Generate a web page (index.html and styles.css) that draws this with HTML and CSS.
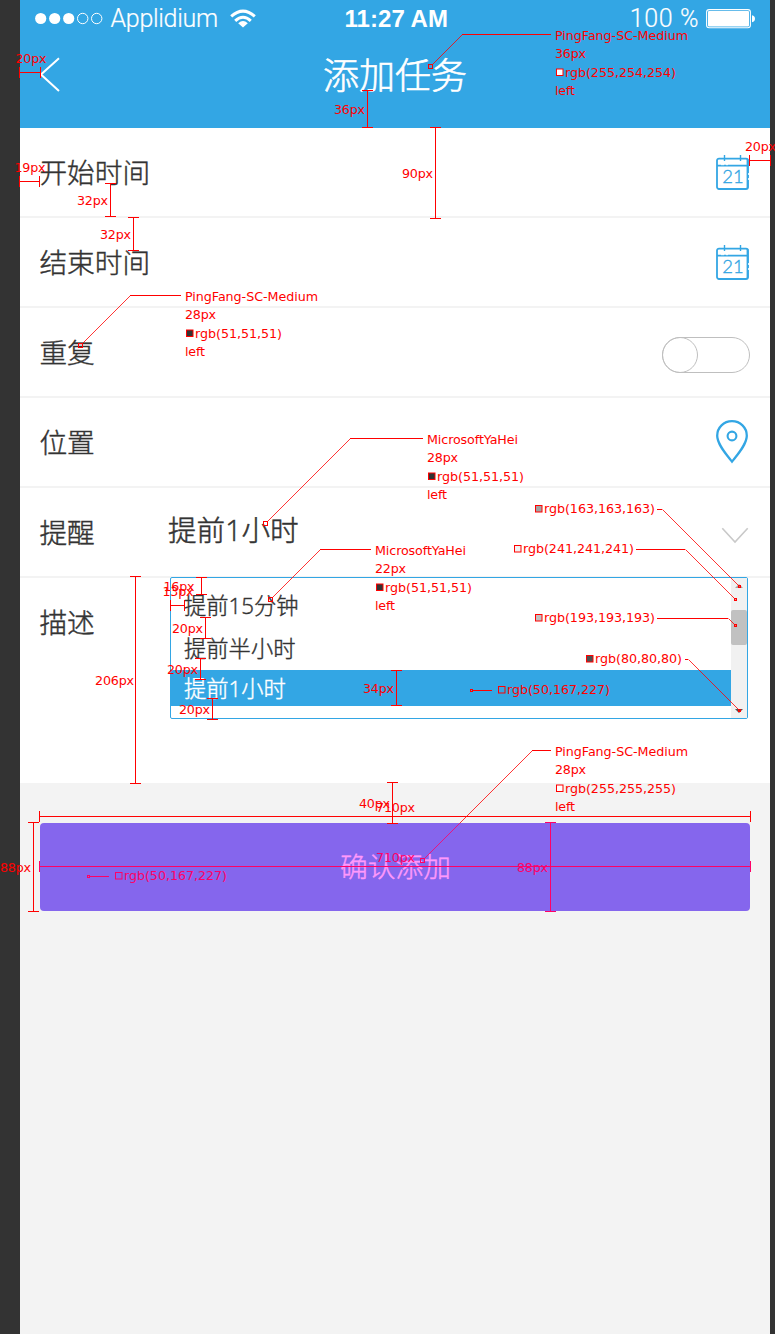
FILE: index.html
```html
<!DOCTYPE html>
<html lang="zh-CN">
<head>
<meta charset="utf-8">
<title>添加任务</title>
<link rel="stylesheet" href="styles.css">
</head>
<body>
<div class="board">
  <main class="phone">
    <header class="header">
      <div class="status">
        <div class="carrier">
          <svg class="signal" width="68" height="13" viewBox="0 0 68 13"><g fill="#fff"><circle cx="5.7" cy="6.5" r="5.6"/><circle cx="19.7" cy="6.5" r="5.6"/><circle cx="33.7" cy="6.5" r="5.6"/></g><g fill="none" stroke="#fff"><circle cx="47.7" cy="6.5" r="5.2"/><circle cx="61.7" cy="6.5" r="5.2"/></g></svg>
          <span class="carrier-name">Applidium</span>
          <svg class="wifi" width="26" height="19" viewBox="0 0 26 19"><g fill="none" stroke="#fff" stroke-width="3"><path d="M1.2 7.4Q13-3.2 24.8 7.4"/><path d="M5.2 11.8Q13 4.6 20.8 11.8"/></g><path d="M8.2 14.2Q13 10 17.8 14.2L13 18.6Z" fill="#fff"/></svg>
        </div>
        <span class="clock">11:27 AM</span>
        <div class="power">
          <span class="percent">100 %</span>
          <svg width="50" height="20" viewBox="0 0 50 20"><rect x=".6" y=".6" width="43.8" height="18.2" rx="2.5" fill="none" stroke="#fff" stroke-width="1.1"/><rect x="2" y="2" width="41" height="15.4" rx="1" fill="#fff"/><path d="M46 6.2Q49 7 49 9.7T46 13.2Z" fill="#fff"/></svg>
        </div>
      </div>
      <div class="titlebar">
        <svg class="back" width="20" height="36" viewBox="0 0 20 36"><path d="M19 1.2L1 17.5L19 34" fill="none" stroke="#fff" stroke-width="2"/></svg>
        <h1 class="title">添加任务</h1>
      </div>
    </header>

    <section class="form">
      <div class="row"><span class="label">开始时间</span>
        <svg class="calendar" width="34" height="36" viewBox="0 0 34 36"><g fill="none" stroke="#33a6e4"><rect x="1" y="3.6" width="31" height="30.4" rx="2" stroke-width="1.8"/><path d="M1 10.7H32M31.5 4V33" stroke-width="1.8"/><path d="M8.5 0V6M24.5 0V6" stroke-width="1.4"/></g><path d="M5 9.7H8M10 9.7H12M32.7 18V20M32.7 23V25" stroke="#fff" stroke-width="1"/><text x="6.3" y="27.6" class="date">21</text></svg>
      </div>
      <div class="row"><span class="label">结束时间</span>
        <svg class="calendar" width="34" height="36" viewBox="0 0 34 36"><g fill="none" stroke="#33a6e4"><rect x="1" y="3.6" width="31" height="30.4" rx="2" stroke-width="1.8"/><path d="M1 10.7H32M31.5 4V33" stroke-width="1.8"/><path d="M8.5 0V6M24.5 0V6" stroke-width="1.4"/></g><path d="M5 9.7H8M10 9.7H12M32.7 18V20M32.7 23V25" stroke="#fff" stroke-width="1"/><text x="6.3" y="27.6" class="date">21</text></svg>
      </div>
      <div class="row"><span class="label">重复</span><span class="toggle"><span class="knob"></span></span></div>
      <div class="row"><span class="label">位置</span>
        <svg class="pin" width="32" height="44" viewBox="0 0 32 44"><path d="M16 41.6C10.5 34.5 1.2 24.3 1.2 15.7C1.2 7.4 7.8 1.2 16 1.2S30.8 7.4 30.8 15.7C30.8 24.3 21.5 34.5 16 41.6Z" fill="none" stroke="#33a6e4" stroke-width="2.3"/><circle cx="16" cy="16" r="4.4" fill="none" stroke="#33a6e4" stroke-width="2.1"/></svg>
      </div>
      <div class="row"><span class="label">提醒</span><span class="value">提前1小时</span>
        <svg class="chevron" width="28" height="17" viewBox="0 0 28 17"><path d="M1.3 1.2L14 15L26.7 1.2" fill="none" stroke="#c9c9c9" stroke-width="1.6"/></svg>
      </div>
      <div class="describe"><span class="label">描述</span>
        <div class="dropdown">
          <ul class="options"><li class="option first">提前15分钟</li><li class="option">提前半小时</li><li class="option selected">提前1小时</li></ul>
          <div class="scrollbar">
            <svg width="8" height="4" viewBox="0 0 8 4"><path d="M0 4L4 0L8 4Z" fill="#a3a3a3"/></svg>
            <div class="thumb"></div>
            <svg width="8" height="4" viewBox="0 0 8 4"><path d="M0 0L4 4L8 0Z" fill="#505050"/></svg>
          </div>
        </div>
      </div>
    </section>
    <button class="confirm">确认添加</button>
  </main>

  <svg class="notes" width="775" height="1334" viewBox="0 0 775 1334">
    <!-- dimension lines -->
    <path class="rule" d="M19.5 72.5H40.5M19.5 67V78M40.5 67V78
      M367.5 90.5V127.5M362 90.5H373M362 127.5H373
      M435.5 127.5V218.5M430 127.5H441M430 218.5H441
      M19.5 181.5H39.5M19.5 176V187M39.5 176V187
      M110.5 183.5V216.5M105 183.5H116M105 216.5H116
      M133.5 217.5V250.5M128 217.5H139M128 250.5H139
      M749.5 160.5H770.5M749.5 155V166M770.5 155V166
      M201.5 577.5V594.5M196 577.5H207M196 594.5H207
      M170.5 605.5H184.5M170.5 600V611M184.5 600V611
      M205.5 617.5V638.5M200 617.5H211M200 638.5H211
      M200.5 658.5V679.5M195 658.5H206M195 679.5H206
      M212.5 698.5V719.5M207 698.5H218M207 719.5H218
      M396.5 670.5V705.5M391 670.5H402M391 705.5H402
      M135.5 576.5V783.5M130 576.5H141M130 783.5H141
      M392.5 782.5V823.5M387 782.5H398M387 823.5H398
      M39.5 816.5H750.5M39.5 811V822M750.5 811V822
      M33.5 822.5V911.5M28 822.5H39M28 911.5H39"/>
    <path class="rule inner" d="M39.5 866.5H750.5M39.5 861V872M750.5 861V872M550.5 822.5V911.5M545 822.5H556M545 911.5H556M90 876.5H109"/>
    <!-- leaders -->
    <path class="rule" d="M462 34.5H551M130 295.5H181M350 438.5H423M320 549.5H371M657 509.5H662M636 549.5H685M657 618.5H728M685 659.5H688M473 690.5H492M532 750.5H551"/>
    <path class="slant" d="M432.5 64.5L462.5 34.5M82.5 343.5L130.5 295.5M267.5 521.5L350.5 438.5M272.5 597.5L320.5 549.5M662.5 509.5L739.5 586.5M685.5 549.5L735.5 599.5M728.5 618.5L735.5 625.5M688.5 659.5L739.5 710.5M532.5 750.5L459.5 823.5"/>
    <path class="slant inner" d="M459.5 823.5L424.5 858.5"/>
    <path class="rule" d="M428.5 64.5h4v4h-4zM78.5 343.5h4v4h-4zM263.5 521.5h4v4h-4zM268.5 597.5h4v4h-4zM738.5 585.5h2v2h-2zM734.5 598.5h2v2h-2zM734.5 624.5h2v2h-2zM738.5 709.5h2v2h-2zM470.5 689.5h2v2h-2z"/>
    <path class="rule inner" d="M420.5 858.5h4v4h-4zM87.5 875.5h2v2h-2z"/>
    <!-- colour swatches -->
    <g class="swatch">
      <rect x="556.5" y="69" width="6.5" height="6.5" fill="#fff"/><rect x="186.5" y="330" width="6.5" height="6.5" fill="#333"/>
      <rect x="428.5" y="473" width="6.5" height="6.5" fill="#333"/><rect x="376.5" y="584" width="6.5" height="6.5" fill="#333"/>
      <rect x="535.5" y="505.5" width="6.5" height="6.5" fill="#a3a3a3"/><rect x="514.5" y="545.5" width="6.5" height="6.5" fill="#f1f1f1"/>
      <rect x="535.5" y="614.5" width="6.5" height="6.5" fill="#c1c1c1"/><rect x="586.5" y="655.5" width="6.5" height="6.5" fill="#505050"/>
      <rect x="498.5" y="686.5" width="6.5" height="6.5" fill="#33a6e4"/><rect x="556.5" y="785" width="6.5" height="6.5" fill="#fff"/>
      <rect class="inner" x="115.5" y="872.5" width="6.5" height="6.5" fill="#8566ed"/>
    </g>
    <g class="note">
      <text x="555" y="40" textLength="133">PingFang-SC-Medium</text><text x="555" y="58" textLength="31">36px</text><text x="565" y="77" textLength="111">rgb(255,254,254)</text><text x="555" y="95" textLength="20">left</text>
      <text x="185" y="301" textLength="133">PingFang-SC-Medium</text><text x="185" y="319" textLength="31">28px</text><text x="195" y="338" textLength="87">rgb(51,51,51)</text><text x="185" y="356" textLength="20">left</text>
      <text x="427" y="444" textLength="91">MicrosoftYaHei</text><text x="427" y="462" textLength="31">28px</text><text x="437" y="481" textLength="87">rgb(51,51,51)</text><text x="427" y="499" textLength="20">left</text>
      <text x="375" y="555" textLength="91">MicrosoftYaHei</text><text x="375" y="573" textLength="31">22px</text><text x="385" y="592" textLength="87">rgb(51,51,51)</text><text x="375" y="610" textLength="20">left</text>
      <text x="555" y="756" textLength="133">PingFang-SC-Medium</text><text x="555" y="774" textLength="31">28px</text><text x="565" y="793" textLength="111">rgb(255,255,255)</text><text x="555" y="811" textLength="20">left</text>
      <text x="544" y="513" textLength="111">rgb(163,163,163)</text><text x="523" y="553" textLength="111">rgb(241,241,241)</text><text x="544" y="622" textLength="111">rgb(193,193,193)</text><text x="595" y="663" textLength="87">rgb(80,80,80)</text><text x="507" y="694" textLength="103">rgb(50,167,227)</text>
      <text x="15.5" y="63" textLength="31">20px</text><text x="334" y="114" textLength="31">36px</text><text x="402" y="178" textLength="31">90px</text><text x="14.5" y="172" textLength="31">19px</text><text x="77" y="205" textLength="31">32px</text><text x="100" y="239" textLength="31">32px</text><text x="745" y="151" textLength="31">20px</text>
      <text x="163.5" y="591" textLength="31">16px</text><text x="162.5" y="596" textLength="31">13px</text><text x="172" y="633" textLength="31">20px</text><text x="167" y="674" textLength="31">20px</text><text x="179" y="714" textLength="31">20px</text><text x="363" y="693" textLength="31">34px</text><text x="95" y="685" textLength="39">206px</text>
      <text x="359" y="808" textLength="31">40px</text><text x="376" y="812" textLength="39">710px</text><text x="0" y="872" textLength="31">88px</text>
      <g class="inner-text"><text x="376" y="862" textLength="39">710px</text><text x="517" y="872" textLength="31">88px</text><text x="124" y="880" textLength="103">rgb(50,167,227)</text></g>
    </g>
  </svg>
</div>
</body>
</html>
```
FILE: styles.css
```css
* { box-sizing: border-box; }
body { margin: 0; background: #333; font-family: "Noto Sans CJK SC", sans-serif; color: #333; }
.board { position: relative; width: 775px; height: 1334px; padding: 0 5px 0 20px; overflow: hidden; background: #333; }
.phone { height: 1334px; background: #f3f3f3; }
svg { display: block; flex: none; }

.header { height: 128px; background: #33a6e4; color: #fff; }
.status { display: grid; grid-template-columns: 1fr auto 1fr; align-items: center; height: 37px; padding: 0 14px 0 14.5px; font-family: Roboto, "Liberation Sans", sans-serif; font-size: 24px; }
.carrier, .power { display: flex; align-items: center; }
.carrier-name { width: 107px; margin: 0 12px 0 8px; font-weight: 300; font-size: 25px; letter-spacing: -.3px; white-space: nowrap; -webkit-text-stroke: .2px; }
.clock { padding-left: 2px; font-family: "Liberation Sans", sans-serif; font-weight: 700; font-size: 24px; letter-spacing: .05px; }
.power { justify-content: flex-end; gap: 7px; }
.percent { font-weight: 300; font-size: 25px; letter-spacing: .6px; -webkit-text-stroke: .2px; }
.titlebar { display: grid; grid-template-columns: 20px 1fr 20px; align-items: center; height: 76px; padding: 0 20px; }
.title { margin: -4px 0 0; text-align: center; font-size: 36px; font-weight: 300; line-height: 50px; -webkit-text-stroke: .6px; }

.form { height: 655px; background: #fff; }
.row { display: flex; align-items: center; height: 90px; padding: 0 20px 0 19px; border-bottom: 2px solid #f3f3f3; }
.row > svg, .toggle { margin-left: auto; }
.label { width: 129px; margin-top: -3px; padding-left: .4px; font-size: 27.7px; font-weight: 300; line-height: 40px; -webkit-text-stroke: .4px; }
.date { font: 300 18.5px Lato, sans-serif; fill: #33a6e4; stroke: #33a6e4; stroke-width: .35px; }
.toggle { width: 88px; height: 36px; margin-top: 5px; border: 1px solid #bfbfbf; border-radius: 18px; }
.knob { display: block; width: 36px; height: 36px; margin: -1px; border: 1px solid #bfbfbf; border-radius: 50%; }
.row > .calendar { margin-top: 2px; }
.row > .pin { margin-right: 2px; }
.row > .chevron { margin-right: 1px; margin-top: 6px; }
.value { font-family: "Open Sans", "Noto Sans CJK SC", sans-serif; font-size: 28.6px; line-height: 40px; margin-bottom: 4px; font-weight: 300; -webkit-text-stroke: .5px; }
.describe { display: flex; padding-left: 19px; }
.describe .label { margin-top: 23px; width: 131px; }
.dropdown { display: flex; width: 578px; height: 142px; margin-top: -1px; border: 1px solid #33a6e4; border-radius: 2px; background: #fff; }
.options { flex: 1; margin: 0; padding: 0; list-style: none; font-family: "Open Sans", "Noto Sans CJK SC", sans-serif; font-size: 22.3px; font-weight: 300; -webkit-text-stroke: .4px; }
.option { height: 43px; padding-left: 13px; line-height: 43px; }
.first { height: 49px; padding-top: 6px; }
.selected { height: 36px; line-height: 37px; background: #33a6e4; color: #fff; }
.scrollbar { display: flex; flex-direction: column; align-items: center; width: 16px; padding: 6px 0 5px; background: #f1f1f1; }
.thumb { width: 16px; height: 35px; margin: 22px 0 auto; border-radius: 2px; background: #c1c1c1; }
.confirm { display: block; width: 710px; height: 88px; margin: 40px 0 0 20px; padding: 0 0 3px 1px; border: 0; border-radius: 4px; background: #8566ed; color: #ff99fb; font: 300 27.7px/85px "Noto Sans CJK SC", sans-serif; -webkit-text-stroke: .4px; }

.notes { position: absolute; top: 0; left: 0; }
.rule { fill: none; stroke: #f00; stroke-width: 1; shape-rendering: crispEdges; }
.slant { fill: none; stroke: #f00; stroke-width: .8; }
.rule.inner, .slant.inner { stroke: #ff0066; }
.swatch { stroke: #f00; stroke-width: 1; }
.swatch .inner { stroke: #ff0066; }
.note { font: 12.7px "DejaVu Sans", sans-serif; fill: #f00; }
.note .inner-text { fill: #ff0066; }
```
